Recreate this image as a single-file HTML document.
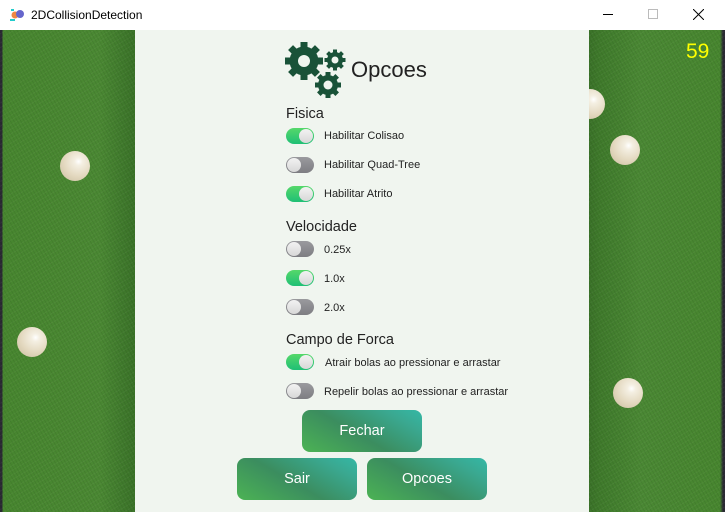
<!DOCTYPE html>
<html><head><meta charset="utf-8"><style>
*{margin:0;padding:0;box-sizing:border-box}
body{width:725px;height:512px;overflow:hidden;font-family:"Liberation Sans",sans-serif;background:#fff;position:relative}
.title{position:absolute;left:0;top:0;width:725px;height:30px;background:#fff;font-size:12px;color:#000}
.title span{position:absolute;left:31px;top:8px}
.bg{position:absolute;left:0;top:30px;width:725px;height:482px;background:linear-gradient(90deg,#2a2a33 0,#2a2a33 2px,#47862f 3px,#4a8833 100px,#3a7228 135px,#3a7228 589px,#3f7a2b 600px,#4a8834 640px,#47862f 720px,#2a2a33 723px)}
.tex{position:absolute;left:0;top:30px;width:725px;height:482px;opacity:.25;background:repeating-linear-gradient(60deg,rgba(0,0,0,.25) 0 1px,transparent 1px 3px),repeating-linear-gradient(-30deg,rgba(255,255,255,.15) 0 1px,transparent 1px 4px)}
.ball{position:absolute;width:30px;height:30px;border-radius:50%;background:radial-gradient(circle at 62% 35%,#fff 0,#f4efe2 15%,#e3d8bf 55%,#c9bc9d 100%)}
.panel{position:absolute;left:135px;top:30px;width:454px;height:482px;background:#f0f5ef}
.h{position:absolute;font-size:14.5px;color:#222}
.lbl{position:absolute;font-size:11px;color:#222}
.tg{position:absolute;left:286px;width:28px;height:16px;border-radius:8px;background:linear-gradient(#9a9a9e,#7d7d82)}
.tg.on{background:linear-gradient(#55d86a,#1fbf75)}
.tg::after{content:"";position:absolute;top:1px;width:14px;height:14px;border-radius:50%;background:linear-gradient(#f2f2f2,#d8d8d8)}
.tg.on::after{right:1px}.tg:not(.on)::after{left:1px}
.btn{position:absolute;width:120px;height:42px;border-radius:8px;color:#fff;font-size:14.5px;text-align:center;line-height:42px;background:linear-gradient(30deg,#4cb354 0%,#3b8d5f 45%,#3aa890 80%,#34b8a6 100%)}
</style></head><body>
<div class="title">
<svg style="position:absolute;left:9px;top:8px" width="16" height="14"><circle cx="6" cy="7" r="3.5" fill="#e84"/><circle cx="11" cy="6" r="4" fill="#66c"/><rect x="1" y="11" width="5" height="2" fill="#2cc"/><rect x="2" y="1" width="3" height="2" fill="#2cc"/></svg>
<span>2DCollisionDetection</span>
<div style="position:absolute;left:603px;top:14px;width:10px;height:1px;background:#000"></div>
<div style="position:absolute;left:648px;top:9px;width:10px;height:10px;border:1px solid #bbb"></div>
<svg style="position:absolute;left:693px;top:9px" width="11" height="11"><path d="M0 0L11 11M11 0L0 11" stroke="#000" stroke-width="1"/></svg>
</div>
<div class="bg"></div>
<div class="tex"></div>
<div class="ball" style="left:60px;top:151px"></div>
<div class="ball" style="left:17px;top:327px"></div>
<div class="ball" style="left:610px;top:135px"></div>
<div class="ball" style="left:613px;top:378px"></div>
<div class="ball" style="left:575px;top:89px"></div>
<div style="position:absolute;left:686px;top:40px;color:#ff0;font-size:21px">59</div>
<div class="panel"></div>
<svg style="position:absolute;left:285px;top:40px" width="64" height="60" viewBox="0 0 64 60">
<g fill="#195238">
<g transform="translate(19,21)"><circle r="14.5"/><g id="t"><rect x="-3.5" y="-19" width="7" height="38"/></g><use href="#t" transform="rotate(45)"/><use href="#t" transform="rotate(90)"/><use href="#t" transform="rotate(135)"/></g>
<g transform="translate(50,20)"><circle r="8"/><g id="s"><rect x="-2" y="-10.5" width="4" height="21"/></g><use href="#s" transform="rotate(45)"/><use href="#s" transform="rotate(90)"/><use href="#s" transform="rotate(135)"/></g>
<g transform="translate(43,45)"><circle r="10"/><g id="m"><rect x="-2.5" y="-13" width="5" height="26"/></g><use href="#m" transform="rotate(45)"/><use href="#m" transform="rotate(90)"/><use href="#m" transform="rotate(135)"/></g>
</g>
<g fill="#f0f5ef"><circle cx="19" cy="21" r="6"/><circle cx="50" cy="20" r="3.5"/><circle cx="43" cy="45" r="4.5"/></g>
</svg>
<div style="position:absolute;left:351px;top:57px;font-size:22px;color:#222">Opcoes</div>
<div class="h" style="left:286px;top:106px">Fisica</div>
<div class="tg on" style="top:128px"></div><div class="lbl" style="left:324px;top:130px">Habilitar Colisao</div>
<div class="tg" style="top:157px"></div><div class="lbl" style="left:324px;top:159px">Habilitar Quad-Tree</div>
<div class="tg on" style="top:186px"></div><div class="lbl" style="left:324px;top:188px">Habilitar Atrito</div>
<div class="h" style="left:286px;top:219px">Velocidade</div>
<div class="tg" style="top:241px"></div><div class="lbl" style="left:324px;top:244px">0.25x</div>
<div class="tg on" style="top:270px"></div><div class="lbl" style="left:324px;top:273px">1.0x</div>
<div class="tg" style="top:299px"></div><div class="lbl" style="left:324px;top:302px">2.0x</div>
<div class="h" style="left:286px;top:332px">Campo de Forca</div>
<div class="tg on" style="top:354px"></div><div class="lbl" style="left:325px;top:357px">Atrair bolas ao pressionar e arrastar</div>
<div class="tg" style="top:383px"></div><div class="lbl" style="left:324px;top:386px">Repelir bolas ao pressionar e arrastar</div>
<div class="btn" style="left:302px;top:410px;line-height:43px">Fechar</div>
<div class="btn" style="left:237px;top:458px;line-height:43px">Sair</div>
<div class="btn" style="left:367px;top:458px;line-height:43px">Opcoes</div>
</body></html>
